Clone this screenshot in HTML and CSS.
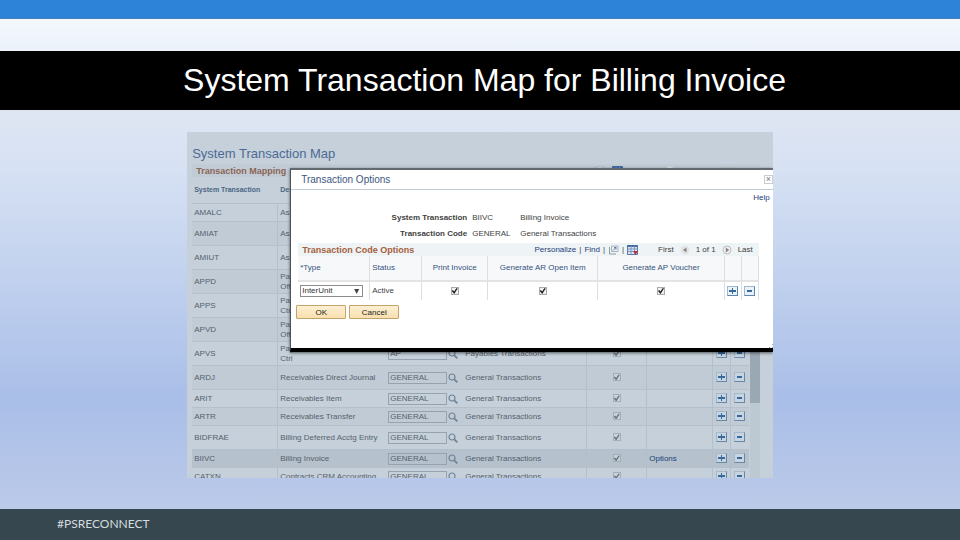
FILE: index.html
```html
<!DOCTYPE html>
<html lang="en">
<head>
  <meta charset="UTF-8">
  <meta name="viewport" content="width=device-width, initial-scale=1.0">
  <title>System Transaction Map for Billing Invoice</title>
  <link rel="stylesheet" href="styles.css">
</head>
<body>
  <!-- Shared icons -->
  <svg class="sprite" aria-hidden="true">
    <symbol id="lookup" viewBox="0 0 10 10">
      <circle cx="4" cy="4" r="3" fill="none" stroke="currentColor" stroke-width="1.2"/>
      <path d="M6.3 6.3 L9.3 9.3" stroke="currentColor" stroke-width="1.8"/>
    </symbol>
    <symbol id="popout" viewBox="0 0 11 10">
      <path d="M1.5 2 V9 H8" fill="none" stroke="#8f9aa3"/>
      <path d="M3.5 1 H10 V6.5 H3.5 Z" fill="#eef2f5" stroke="#aab4bc"/>
      <path d="M5 5.5 L8 2.5 M6 2.5 H8 V4.5" fill="none" stroke="#5d7fa6"/>
    </symbol>
    <symbol id="grid" viewBox="0 0 11 10">
      <path d="M0.5 0.5 H10.5 V9.5 H0.5 Z" fill="#dbe6f4" stroke="#5878ab"/>
      <path d="M0.5 1 H10.5" stroke="#4469a5" stroke-width="2"/>
      <path d="M0.5 4 H10.5 M0.5 6.5 H10.5 M4 1 V9.5 M7.5 1 V9.5" stroke="#7c97c2"/>
      <path d="M6 6 H11 L8.5 10 Z" fill="#b8323c"/>
    </symbol>
    <symbol id="prev" viewBox="0 0 10 10">
      <circle cx="5" cy="5" r="4.5" fill="#e4e4e4"/>
      <path d="M6.5 2.5 V7.5 L3 5 Z" fill="#858585"/>
    </symbol>
    <symbol id="next" viewBox="0 0 10 10">
      <circle cx="5" cy="5" r="4" fill="#f1f1f1" stroke="#bdbdbd"/>
      <path d="M3.8 2.5 V7.5 L7.3 5 Z" fill="#858585"/>
    </symbol>
  </svg>

  <div class="topbar"></div>
  <header class="slide-title">
    <h1>System Transaction Map for Billing Invoice</h1>
  </header>

  <main>
    <div class="app">
      <section class="page">
        <h2>System Transaction Map</h2>
        <div class="group-bar">
          <h3>Transaction Mapping</h3>
          <div class="tools">
            <a href="#">Personalize</a> | <a href="#">Find</a> |
            <svg class="tool-icon"><use href="#popout"/></svg> |
            <svg class="tool-icon"><use href="#grid"/></svg>
          </div>
          <div class="pager">First <svg><use href="#prev"/></svg> 1-20 of 20 <svg><use href="#next"/></svg> Last</div>
        </div>
        <div class="grid-wrap">
          <table class="map">
            <colgroup>
              <col class="c-code"><col class="c-desc"><col class="c-tran"><col class="c-name">
              <col class="c-check"><col><col class="c-btn"><col class="c-btn">
            </colgroup>
            <thead>
              <tr><th>System Transaction</th><th>Description</th><th></th><th></th><th></th><th></th><th></th><th></th></tr>
            </thead>
            <tbody>
              <tr class="short">
                <td>AMALC</td><td>Asset</td>
                <td></td><td></td><td></td><td></td><td></td><td></td>
              </tr>
              <tr>
                <td>AMIAT</td><td>Asset</td>
                <td></td><td></td><td></td><td></td><td></td><td></td>
              </tr>
              <tr>
                <td>AMIUT</td><td>Asset</td>
                <td></td><td></td><td></td><td></td><td></td><td></td>
              </tr>
              <tr>
                <td>APPD</td><td>Payables<br>Offset</td>
                <td></td><td></td><td></td><td></td><td></td><td></td>
              </tr>
              <tr>
                <td>APPS</td><td>Payables<br>Ctrl</td>
                <td></td><td></td><td></td><td></td><td></td><td></td>
              </tr>
              <tr>
                <td>APVD</td><td>Payables<br>Offset</td>
                <td></td><td></td><td></td><td></td><td></td><td></td>
              </tr>
              <tr>
                <td>APVS</td><td>Payables<br>Ctrl</td>
                <td><div class="lookup"><input type="text" value="AP" aria-label="Transaction code APVS"><svg><use href="#lookup"/></svg></div></td>
                <td>Payables Transactions</td>
                <td><input type="checkbox" checked disabled aria-label="APVS enabled"></td><td></td>
                <td><button class="row-btn plus" aria-label="Add row"></button></td>
                <td><button class="row-btn" aria-label="Delete row"></button></td>
              </tr>
              <tr>
                <td>ARDJ</td><td>Receivables Direct Journal</td>
                <td><div class="lookup"><input type="text" value="GENERAL" aria-label="Transaction code ARDJ"><svg><use href="#lookup"/></svg></div></td>
                <td>General Transactions</td>
                <td><input type="checkbox" checked disabled aria-label="ARDJ enabled"></td><td></td>
                <td><button class="row-btn plus" aria-label="Add row"></button></td>
                <td><button class="row-btn" aria-label="Delete row"></button></td>
              </tr>
              <tr class="short">
                <td>ARIT</td><td>Receivables Item</td>
                <td><div class="lookup"><input type="text" value="GENERAL" aria-label="Transaction code ARIT"><svg><use href="#lookup"/></svg></div></td>
                <td>General Transactions</td>
                <td><input type="checkbox" checked disabled aria-label="ARIT enabled"></td><td></td>
                <td><button class="row-btn plus" aria-label="Add row"></button></td>
                <td><button class="row-btn" aria-label="Delete row"></button></td>
              </tr>
              <tr class="short">
                <td>ARTR</td><td>Receivables Transfer</td>
                <td><div class="lookup"><input type="text" value="GENERAL" aria-label="Transaction code ARTR"><svg><use href="#lookup"/></svg></div></td>
                <td>General Transactions</td>
                <td><input type="checkbox" checked disabled aria-label="ARTR enabled"></td><td></td>
                <td><button class="row-btn plus" aria-label="Add row"></button></td>
                <td><button class="row-btn" aria-label="Delete row"></button></td>
              </tr>
              <tr>
                <td>BIDFRAE</td><td>Billing Deferred Acctg Entry</td>
                <td><div class="lookup"><input type="text" value="GENERAL" aria-label="Transaction code BIDFRAE"><svg><use href="#lookup"/></svg></div></td>
                <td>General Transactions</td>
                <td><input type="checkbox" checked disabled aria-label="BIDFRAE enabled"></td><td></td>
                <td><button class="row-btn plus" aria-label="Add row"></button></td>
                <td><button class="row-btn" aria-label="Delete row"></button></td>
              </tr>
              <tr class="short selected">
                <td>BIIVC</td><td>Billing Invoice</td>
                <td><div class="lookup"><input type="text" value="GENERAL" aria-label="Transaction code BIIVC"><svg><use href="#lookup"/></svg></div></td>
                <td>General Transactions</td>
                <td><input type="checkbox" checked disabled aria-label="BIIVC enabled"></td><td><a href="#">Options</a></td>
                <td><button class="row-btn plus" aria-label="Add row"></button></td>
                <td><button class="row-btn" aria-label="Delete row"></button></td>
              </tr>
              <tr class="short">
                <td>CATXN</td><td>Contracts CRM Accounting</td>
                <td><div class="lookup"><input type="text" value="GENERAL" aria-label="Transaction code CATXN"><svg><use href="#lookup"/></svg></div></td>
                <td>General Transactions</td>
                <td><input type="checkbox" checked disabled aria-label="CATXN enabled"></td><td></td>
                <td><button class="row-btn plus" aria-label="Add row"></button></td>
                <td><button class="row-btn" aria-label="Delete row"></button></td>
              </tr>
            </tbody>
          </table>
          <div class="scrollbar"><div class="thumb"></div></div>
        </div>
      </section>

      <!-- Transaction Options modal -->
      <section class="modal">
        <div class="modal-head">
          <h2>Transaction Options</h2>
          <button class="close" aria-label="Close">×</button>
        </div>
        <a class="help" href="#">Help</a>
        <dl class="fields">
          <dt>System Transaction</dt><dd>BIIVC</dd><dd>Billing Invoice</dd>
          <dt>Transaction Code</dt><dd>GENERAL</dd><dd>General Transactions</dd>
        </dl>
        <div class="options">
          <div class="group-bar">
            <h3>Transaction Code Options</h3>
            <div class="tools">
              <a href="#">Personalize</a> | <a href="#">Find</a> |
              <svg class="tool-icon"><use href="#popout"/></svg> |
              <svg class="tool-icon"><use href="#grid"/></svg>
            </div>
            <div class="pager">First <svg><use href="#prev"/></svg> 1 of 1 <svg><use href="#next"/></svg> Last</div>
          </div>
          <table class="codes">
            <colgroup>
              <col class="o-type"><col class="o-status"><col class="o-print"><col class="o-ar"><col>
              <col class="o-btn"><col class="o-btn">
            </colgroup>
            <thead>
              <tr><th>*Type</th><th>Status</th><th>Print Invoice</th><th>Generate AR Open Item</th><th>Generate AP Voucher</th><th></th><th></th></tr>
            </thead>
            <tbody>
              <tr>
                <td><div class="select"><select aria-label="Type"><option>InterUnit</option></select></div></td>
                <td>Active</td>
                <td><input type="checkbox" checked aria-label="Print Invoice"></td>
                <td><input type="checkbox" checked aria-label="Generate AR Open Item"></td>
                <td><input type="checkbox" checked aria-label="Generate AP Voucher"></td>
                <td><button class="row-btn plus" aria-label="Add row"></button></td>
                <td><button class="row-btn" aria-label="Delete row"></button></td>
              </tr>
            </tbody>
          </table>
        </div>
        <div class="actions">
          <button>OK</button>
          <button>Cancel</button>
        </div>
        <div class="grip"></div>
      </section>
    </div>
  </main>

  <footer>#PSRECONNECT</footer>
</body>
</html>
```

FILE: styles.css
```css
* {
  box-sizing: border-box;
}
body {
  display: flex;
  flex-direction: column;
  height: 100vh;
  margin: 0;
  overflow: hidden;
  font-family: "Liberation Sans", Arial, sans-serif;
  background: linear-gradient(#f3f8fe 19px, #dfe6f3 110px, #d6e1f3 170px, #a9bee8 400px, #bccae9 509px);
}
h1, h2, h3, dl, dd {
  margin: 0;
}
a {
  color: #1d4178;
  text-decoration: none;
}
button {
  font-family: inherit;
  cursor: pointer;
}
.sprite {
  position: absolute;
  width: 0;
  height: 0;
}

/* Slide frame */
.topbar {
  height: 19px;
  background: #2d83d7;
  border-bottom: 1px solid #4a7fb0;
}
.slide-title {
  margin-top: 32px;
  padding: 0 0 0 9px;
  background: #000;
  color: #fff;
  text-align: center;
}
.slide-title h1 {
  font-size: 32px;
  font-weight: normal;
  line-height: 59px;
}
main {
  display: flex;
  justify-content: center;
  flex: 1;
  min-height: 0;
  padding: 22px 0 31px;
}
footer {
  height: 31px;
  padding-left: 57px;
  background: #36474f;
  color: #d5dcdf;
  font-family: Lato, sans-serif;
  font-size: 12px;
  line-height: 30px;
}

/* Application window */
.app {
  position: relative;
  width: 61%;
  overflow: hidden;
  background: #c5d0da;
  color: #56626d;
  font-size: 8px;
  line-height: 10px;
}
.page {
  padding: 14px 13px 0 5px;
}
.page h2 {
  color: #4c6a95;
  font-size: 13px;
  font-weight: normal;
  line-height: 15px;
}
.group-bar {
  display: flex;
  align-items: center;
  height: 13px;
}
.group-bar h3 {
  flex: 1;
  padding-left: 4px;
  color: #a5603c;
  font-size: 9px;
}
.page .group-bar {
  margin-top: 3px;
  background: #c0cbd5;
}
.page .group-bar h3 {
  color: #8c6553;
}
.tools, .pager {
  display: flex;
  align-items: center;
  gap: 3px;
}
.pager {
  gap: 6px;
  margin-left: 20px;
  padding-right: 6px;
}
.tool-icon {
  width: 11px;
  height: 10px;
}
.pager svg {
  width: 10px;
  height: 10px;
}
table {
  flex: 1;
  width: 100%;
  table-layout: fixed;
  border-collapse: separate;
  border-spacing: 0;
}
th, td {
  padding: 0;
}
.grid-wrap {
  display: flex;
  gap: 1px;
}
.map th {
  height: 27px;
  padding-left: 2px;
  border-bottom: 1px solid #b3bfca;
  color: #4c6685;
  font-size: 7px;
  text-align: left;
}
.map td {
  height: 24px;
  padding-left: 2px;
  border-bottom: 1px solid #b5c0ca;
}
.map .short td {
  height: 18px;
}
.map tbody tr:nth-child(even) {
  background: #c0cbd6;
}
.map tbody tr.selected {
  background: #b5c1cc;
}
.map td:nth-child(1), .map td:nth-child(n+4):nth-child(-n+7) {
  border-right: 1px solid #b3bfca;
}
.map td:nth-child(4) {
  padding-left: 3px;
}
.map td:nth-child(5), .map td:nth-child(7), .map td:nth-child(8) {
  padding: 0;
  text-align: center;
}
.c-code {
  width: 86px;
}
.c-desc {
  width: 108px;
}
.c-tran {
  width: 76px;
}
.c-name {
  width: 125px;
}
.c-check {
  width: 60px;
}
.c-btn {
  width: 18px;
}
.lookup {
  display: flex;
  align-items: center;
  gap: 1px;
}
.lookup input {
  width: 59px;
  height: 12px;
  padding: 0 1px;
  border: 1px solid #96a2ad;
  background: transparent;
  color: #56626d;
  font: inherit;
}
.lookup svg {
  width: 10px;
  height: 10px;
  color: #6e8296;
}
.scrollbar {
  width: 10px;
  background: #bcc8d2;
}
.thumb {
  height: 226px;
  background: #9aa8b4;
}

/* Small controls */
input[type="checkbox"] {
  display: inline-block;
  width: 8px;
  height: 8px;
  margin: 0;
  border: 1px solid #a9a9a9;
  appearance: none;
  background: #f0f0f0;
  vertical-align: middle;
}
input[type="checkbox"]::before {
  content: "";
  display: block;
  height: 6px;
  background: #222;
  clip-path: polygon(0 50%, 20% 35%, 40% 60%, 80% 0, 100% 12%, 42% 100%);
}
input[type="checkbox"]:disabled {
  border-color: #a3aeb8;
  background: #c8d1d9;
}
input[type="checkbox"]:disabled::before {
  background: #67737d;
}
.row-btn {
  display: inline-block;
  width: 11px;
  height: 10px;
  padding: 0;
  border: 1px solid #9fb9d0;
  border-right-color: #5c86ab;
  border-bottom-color: #5c86ab;
  background: linear-gradient(#39699c, #39699c) center / 5px 2px no-repeat, #e9f2f9;
  vertical-align: middle;
}
.row-btn.plus {
  background: linear-gradient(#39699c, #39699c) center / 7px 2px no-repeat,
    linear-gradient(#39699c, #39699c) center / 1px 6px no-repeat, #e9f2f9;
}
.map .row-btn {
  border-color: #a5b9cb #6888a5 #6888a5 #a5b9cb;
  background-color: #c6d5e1;
}

/* Modal */
.modal {
  position: absolute;
  top: 36px;
  left: 103px;
  right: 0;
  border-top: 2px solid #626a71;
  border-left: 1px solid #4b5258;
  border-bottom: 4px solid #000;
  background: #fff;
  box-shadow: 0 1px 3px rgba(0, 0, 0, 0.6);
  color: #3f3f3f;
}
.modal-head {
  display: flex;
  align-items: center;
  justify-content: space-between;
  height: 20px;
  padding-left: 10px;
  border-bottom: 1px solid #c1ccd5;
}
.modal-head h2 {
  color: #3c5682;
  font-size: 10px;
  font-weight: normal;
}
.close {
  width: 9px;
  height: 9px;
  padding: 0;
  border: 1px solid #ccc;
  background: #fff;
  color: #777;
  font-size: 9px;
  line-height: 7px;
}
.help {
  display: block;
  padding: 3px 3px 0 0;
  text-align: right;
}
.fields {
  display: grid;
  grid-template-columns: 176px 43px 1fr;
  gap: 0 5px;
  padding-top: 7px;
  line-height: 16px;
}
.fields dt {
  font-weight: bold;
  text-align: right;
}
.options {
  margin: 1px 14px 0 7px;
}
.modal .group-bar {
  background: #eef3f6;
}
.codes th {
  height: 26px;
  border-right: 1px solid #dcdfe2;
  border-bottom: 2px solid #e3e3e3;
  background: #f7f8f9;
  color: #35537f;
  font-weight: normal;
}
.codes td {
  height: 18px;
  border-right: 1px solid #dcdfe2;
  text-align: center;
}
.codes th:nth-child(-n+2), .codes td:nth-child(-n+2) {
  padding-left: 2px;
  text-align: left;
}
.o-type {
  width: 72px;
}
.o-status {
  width: 52px;
}
.o-print {
  width: 66px;
}
.o-ar {
  width: 110px;
}
.o-btn {
  width: 17px;
}
.select {
  position: relative;
  width: 63px;
}
.select select {
  display: block;
  width: 100%;
  height: 12px;
  padding: 0 1px;
  border: 1px solid #8c8c8c;
  appearance: none;
  background: #fff;
  color: #333;
  font: inherit;
}
.select::after {
  content: "";
  position: absolute;
  top: 4px;
  right: 4px;
  width: 5px;
  height: 5px;
  background: #444;
  clip-path: polygon(0 0, 100% 0, 50% 100%);
  pointer-events: none;
}
.actions {
  display: flex;
  gap: 3px;
  padding: 5px 0 24px 5px;
}
.actions button {
  width: 50px;
  height: 14px;
  padding: 0;
  border: 1px solid #c5a36d;
  border-radius: 1px;
  background: linear-gradient(#fdf0d4, #f8dfae);
  color: #222;
  font-size: 8px;
}
.grip {
  width: 5px;
  height: 5px;
  margin-left: auto;
  background: radial-gradient(#999 1px, transparent 1px) 0 0 / 3px 3px;
  clip-path: polygon(100% 0, 100% 100%, 0 100%);
}
```
